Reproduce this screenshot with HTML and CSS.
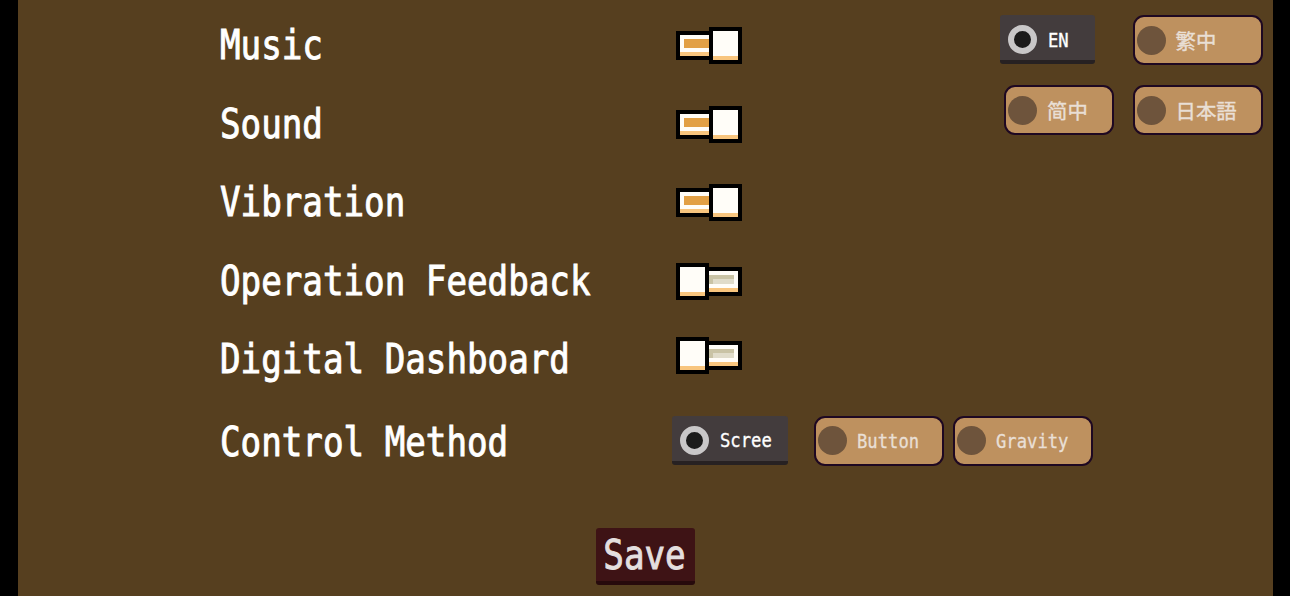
FILE: index.html
```html
<!DOCTYPE html>
<html lang="en">

<head>
  <meta charset="UTF-8">
  <meta name="viewport" content="width=device-width, initial-scale=1.0">
  <title>Settings</title>
  <link rel="stylesheet" href="styles.css">
</head>

<body>
  <!-- Switch sprites, 16x9 pixel grid -->
  <svg class="sprites" shape-rendering="crispEdges">
    <symbol id="switch-on" viewBox="0 0 16 9" preserveAspectRatio="none">
      <path fill="#000" d="M0 1h8v7H0zM8 0h8v9H8z" />
      <path fill="#fffdf8" d="M1 2h7v4H1zM9 1h6v6H9z" />
      <path fill="#e2a045" d="M2 3h6v2H2z" />
      <path fill="#f8c57e" d="M1 6h7v1H1zM9 7h6v1H9z" />
    </symbol>
    <symbol id="switch-off" viewBox="0 0 16 9" preserveAspectRatio="none">
      <path fill="#000" d="M8 1h8v7H8zM0 0h8v9H0z" />
      <path fill="#fffdf8" d="M8 2h7v4H8zM1 1h6v6H1z" />
      <path fill="#c9c3a5" d="M8 3h6v1H8zM8 4h1v1H8z" />
      <path fill="#e0dcca" d="M9 4h5v1H9z" />
      <path fill="#f8c57e" d="M8 6h7v1H8zM1 7h6v1H1z" />
    </symbol>
  </svg>

  <main class="settings">
    <div class="label"><span>Music</span></div>
    <svg class="switch" shape-rendering="crispEdges"><use href="#switch-on" /></svg>

    <div class="languages">
      <button class="option selected"><i class="dot"></i><span class="text">EN</span></button>
      <button class="option wide"><i class="dot"></i><span class="cjk tc">繁中</span></button>
      <button class="option narrow"><i class="dot"></i><span class="cjk">简中</span></button>
      <button class="option wide"><i class="dot"></i><span class="cjk jp">日本語</span></button>
    </div>

    <div class="label"><span>Sound</span></div>
    <svg class="switch" shape-rendering="crispEdges"><use href="#switch-on" /></svg>

    <div class="label"><span>Vibration</span></div>
    <svg class="switch third" shape-rendering="crispEdges"><use href="#switch-on" /></svg>

    <div class="label"><span>Operation Feedback</span></div>
    <svg class="switch" shape-rendering="crispEdges"><use href="#switch-off" /></svg>

    <div class="label"><span>Digital Dashboard</span></div>
    <svg class="switch raised" shape-rendering="crispEdges"><use href="#switch-off" /></svg>

    <div class="label"><span>Control Method</span></div>
    <div class="methods">
      <button class="option selected screen"><i class="dot"></i><span class="text">Scree</span></button>
      <button class="option wide"><i class="dot"></i><span class="text">Button</span></button>
      <button class="option gravity"><i class="dot"></i><span class="text">Gravity</span></button>
    </div>

    <button class="save"><span>Save</span></button>
  </main>
</body>

</html>
```
FILE: styles.css
```css
* {
  box-sizing: border-box;
}

body {
  margin: 0;
  height: 596px;
  padding: 0 17px 0 18px;
  background-color: #000;
  color: #fff;
  font-family: "DejaVu Sans Mono", "Noto Sans CJK SC", monospace;
  overflow: hidden;
}

button {
  margin: 0;
  padding: 0;
  border: none;
  color: inherit;
  font-family: inherit;
}

.sprites {
  display: block;
  width: 0;
  height: 0;
}

.settings {
  display: grid;
  grid-template-columns: 456px 324px 263px;
  grid-template-rows: 79px 79px 78px 79px 78px 87px 111px;
  align-items: center;
  height: 596px;
  padding: 5px 10px 0 202px;
  background-color: #563f1f;
}

.label {
  grid-column: 1;
}

/* Tall narrow letters */
.label span,
.save span {
  display: block;
  font-size: 34.2px;
  line-height: 40px;
  white-space: nowrap;
  transform: scaleY(1.18);
  -webkit-text-stroke: 0.8px currentColor;
}

.switch {
  grid-column: 2;
  width: 66px;
  height: 37px;
  margin-top: 2px;
}

.switch.third {
  margin-top: 0;
}

.switch.raised {
  margin-top: 0;
  margin-bottom: 7px;
}

.languages {
  grid-column: 3;
  grid-row: 1 / 3;
  align-self: start;
  display: grid;
  grid-template-columns: 132px 131px;
  gap: 20px 0;
  padding-top: 10px;
}

.languages .wide {
  margin-left: 0.5px;
}

.methods {
  grid-column: 2 / 4;
  display: flex;
  gap: 9px;
  margin-left: -4px;
  margin-bottom: 2px;
}

.option {
  display: flex;
  align-items: center;
  gap: 10px;
  height: 50px;
  padding-left: 2px;
  border: 2px solid #1e0822;
  border-radius: 11px;
  background-color: #be915f;
  color: #e9dfd5;
}

.option.wide {
  width: 130px;
}

.option.narrow {
  width: 110px;
  margin-left: 4px;
}

.option.gravity {
  width: 140px;
}

.option.selected {
  gap: 11px;
  width: 95px;
  height: 49px;
  padding: 0 0 0 8px;
  border: none;
  border-bottom: 4px solid #272122;
  border-radius: 3px;
  background-color: #433c3d;
  color: #fff;
}

.option.screen {
  width: 116px;
  margin-right: 17px;
}

.dot {
  flex: none;
  width: 29px;
  height: 29px;
  border-radius: 50%;
  background-color: #6e543c;
}

.selected .dot {
  margin-top: 4px;
  border: 6.5px solid #c9c7c8;
  background-color: #1c1b1b;
}

.text {
  font-size: 17.2px;
  line-height: 22px;
  transform: scaleY(1.15);
  -webkit-text-stroke: 0.3px currentColor;
}

.selected .text {
  margin-top: 4px;
}

.cjk {
  font-family: "Noto Sans CJK SC", sans-serif;
  font-size: 20.4px;
  line-height: 24px;
  -webkit-text-stroke: 0.4px currentColor;
}

.cjk.tc {
  font-family: "Noto Sans CJK TC", sans-serif;
}

.cjk.jp {
  font-family: "Noto Sans CJK JP", sans-serif;
}

.save {
  grid-column: 1 / 4;
  align-self: end;
  width: 99px;
  height: 57px;
  margin: 0 0 11px 376px;
  border-bottom: 4px solid #270a0c;
  border-radius: 3px;
  background-color: #3e1315;
  color: #e4dfdf;
}

.save span {
  margin-left: -2px;
}
```
